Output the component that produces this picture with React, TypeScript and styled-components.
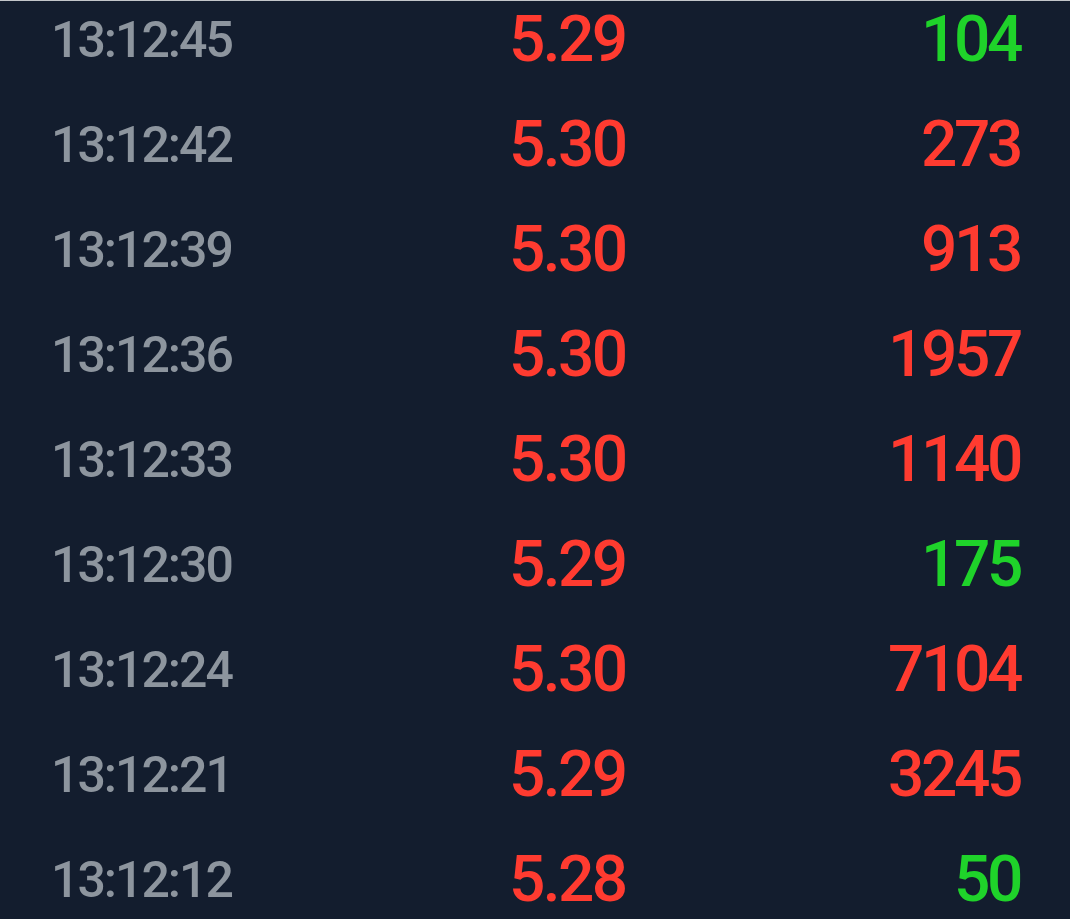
import React from "react";
import styled, { createGlobalStyle } from "styled-components";

const Global = createGlobalStyle`
  html, body {
    margin: 0;
    padding: 0;
    background: #131d2e;
    overflow: hidden;
  }
  body {
    font-family: Roboto, "Noto Sans", sans-serif;
  }
`;

const Panel = styled.div`
  width: 1070px;
  height: 919px;
  box-sizing: border-box;
  background: #131d2e;
  border-top: 1px solid #c3c6ca;
  overflow: hidden;
`;

const Row = styled.div`
  display: grid;
  grid-template-columns: 459px 1fr auto;
  align-items: center;
  height: 105px;
  box-sizing: border-box;
  padding: 0 50px 27px 51px;
`;

const Time = styled.span`
  font-size: 50px;
  font-weight: 500;
  line-height: 1;
  color: #8d959e;
  letter-spacing: -2px;
`;

const Price = styled.span`
  font-size: 64px;
  font-weight: 500;
  line-height: 1;
  color: #ff3b30;
  letter-spacing: -2.6px;
  margin-left: -1px;
`;

const Volume = styled.span<{ $up: boolean }>`
  font-size: 64px;
  font-weight: 500;
  line-height: 1;
  color: ${(p) => (p.$up ? "#1fd32a" : "#ff3b30")};
  letter-spacing: -3.4px;
  text-align: right;
`;

const trades = [
  { t: "13:12:45", p: "5.29", v: "104", up: true },
  { t: "13:12:42", p: "5.30", v: "273", up: false },
  { t: "13:12:39", p: "5.30", v: "913", up: false },
  { t: "13:12:36", p: "5.30", v: "1957", up: false },
  { t: "13:12:33", p: "5.30", v: "1140", up: false },
  { t: "13:12:30", p: "5.29", v: "175", up: true },
  { t: "13:12:24", p: "5.30", v: "7104", up: false },
  { t: "13:12:21", p: "5.29", v: "3245", up: false },
  { t: "13:12:12", p: "5.28", v: "50", up: true },
];

export default function App() {
  return (
    <>
      <Global />
      <Panel>
        {trades.map((r) => (
          <Row key={r.t}>
            <Time>{r.t}</Time>
            <Price>{r.p}</Price>
            <Volume $up={r.up}>{r.v}</Volume>
          </Row>
        ))}
      </Panel>
    </>
  );
}
